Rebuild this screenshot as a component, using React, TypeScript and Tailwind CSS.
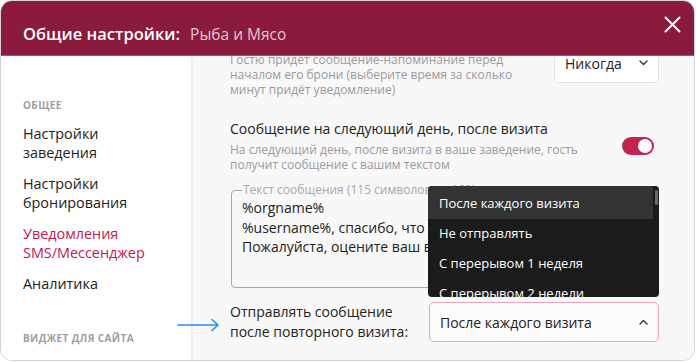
import React from "react";

const Chevron = ({ up = false }: { up?: boolean }) => (
  <svg width="9" height="6" viewBox="0 0 9 6" className={up ? "rotate-180" : ""}>
    <path d="M1 1l3.5 3.5L8 1" fill="none" stroke="#333" strokeWidth="1.4" strokeLinecap="round" strokeLinejoin="round" />
  </svg>
);

export default function App() {
  const menu = ["После каждого визита", "Не отправлять", "С перерывом 1 неделя", "С перерывом 2 недели"];

  return (
    <div className="w-[696px] h-[362px] bg-white overflow-hidden" style={{ fontFamily: '"Open Sans", "Noto Sans", sans-serif' }}>
      <div className="relative w-[695px] h-[361px] rounded-[12px] border border-[#d4d4d4] overflow-hidden flex flex-col">
        {/* header */}
        <div className="h-[55px] shrink-0 bg-[#8a1b3d] border-b border-[#b0496b] flex items-start justify-between pl-[22px] pr-[13px]">
          <div className="pt-[21px] leading-[24px] whitespace-nowrap">
            <span className="text-[16.5px] font-semibold text-white">Общие настройки:</span>
            <span className="ml-[10px] text-[15.5px] text-[#e6c5d1]">Рыба и Мясо</span>
          </div>
          <button className="mt-[15px] w-[17px] h-[17px] flex items-center justify-center">
            <svg width="17" height="17" viewBox="0 0 17 17">
              <path d="M1.5 1.5l14 14M15.5 1.5l-14 14" stroke="#fff" strokeWidth="2" strokeLinecap="round" />
            </svg>
          </button>
        </div>

        <div className="flex flex-1 min-h-0">
          {/* sidebar */}
          <div className="w-[190px] shrink-0 bg-white pl-[22px] pt-[42px] text-[#222]">
            <div className="text-[10px] leading-[14px] font-bold tracking-[0.04em] text-[#9e9e9e]">ОБЩЕЕ</div>
            <div className="mt-[13px] flex flex-col gap-[13px] text-[14.4px] leading-[18.5px]">
              <div>Настройки<br />заведения</div>
              <div>Настройки<br />бронирования</div>
              <div className="text-[#c2174f]">Уведомления<br />SMS/Мессенджер</div>
              <div>Аналитика</div>
            </div>
            <div className="mt-[37px] text-[10px] leading-[14px] font-bold tracking-[0.04em] text-[#9e9e9e]">ВИДЖЕТ ДЛЯ САЙТА</div>
          </div>
          <div className="w-[2px] shrink-0 bg-[#ececec]" />

          {/* content */}
          <div className="flex-1 bg-[#f8f8f8] pl-[37px] pr-[35px] overflow-hidden">
            <div className="-mt-[13px] flex items-start justify-between">
              <div className="pt-[9px] text-[12px] leading-[15px] text-[#9a9a9a]">
                Гостю придёт сообщение-напоминание перед<br />
                началом его брони (выберите время за сколько<br />
                минут придёт уведомление)
              </div>
              <div className="w-[105px] h-[40px] rounded-[5px] border border-[#e2e2e2] bg-white flex items-center justify-between pl-[10px] pr-[10px] text-[14px] text-[#222]">
                <span>Никогда</span>
                <Chevron />
              </div>
            </div>

            <div className="mt-[22px] flex items-center justify-between pr-[5px]">
              <div>
                <div className="text-[14px] leading-[20px] text-[#222]">Сообщение на следующий день, после визита</div>
                <div className="mt-[3px] text-[12px] leading-[15px] text-[#9a9a9a]">
                  На следующий день, после визита в ваше заведение, гость<br />
                  получит сообщение с вашим текстом
                </div>
              </div>
              <div className="w-[32px] h-[18px] rounded-full bg-[#c2244f] flex items-center justify-end pr-[2px]">
                <div className="w-[14px] h-[14px] rounded-full bg-white" />
              </div>
            </div>

            <fieldset className="mt-[11px] h-[105px] border border-[#a8a8a8] rounded-[4px] px-[10px] ml-[1px]">
              <legend className="px-[1px] text-[12px] leading-[14px] text-[#a8a8a8] whitespace-nowrap">Текст сообщения (115 символов из 160)</legend>
              <div className="pt-[1px] text-[14px] leading-[19.5px] text-[#222] whitespace-nowrap">
                %orgname%<br />
                %username%, спасибо, что посетили нас!<br />
                Пожалуйста, оцените ваш визит
              </div>
            </fieldset>

            <div className="mt-[14px] flex items-center justify-between">
              <div className="text-[14px] leading-[20px] text-[#222]">
                Отправлять сообщение<br />
                после повторного визита:
              </div>
              <div className="relative">
                <div className="absolute bottom-[45px] -left-[1px] w-[231px] h-[111px] rounded-[4px] bg-[#1b1b1b] overflow-hidden text-[13px] text-white">
                  {menu.map((m, i) => (
                    <div
                      key={m}
                      className={i === 0 ? "h-[33px] pt-[3px] pl-[11px] flex items-center bg-[#333333] mr-[6px]" : "h-[30px] pl-[11px] flex items-center whitespace-nowrap"}
                    >
                      {m}
                    </div>
                  ))}
                  <div className="absolute right-[1px] top-[4px] w-[3px] h-[15px] rounded-[2px] bg-[#6a6a6a]" />
                </div>
                <div className="w-[230px] h-[40px] rounded-[5px] border border-[#eba4bd] bg-[#fdfafb] flex items-center justify-between pl-[10px] pr-[10px] text-[14px] text-[#222]">
                  <span>После каждого визита</span>
                  <Chevron up />
                </div>
              </div>
            </div>
          </div>
        </div>

        {/* pointer arrow */}
        <svg className="absolute left-[176px] top-[317px]" width="44" height="14" viewBox="0 0 44 14">
          <path d="M1 7h40M35 1.5l6 5.5-6 5.5" fill="none" stroke="#2a8cf0" strokeWidth="1.6" strokeLinecap="round" strokeLinejoin="round" />
        </svg>
      </div>
    </div>
  );
}
